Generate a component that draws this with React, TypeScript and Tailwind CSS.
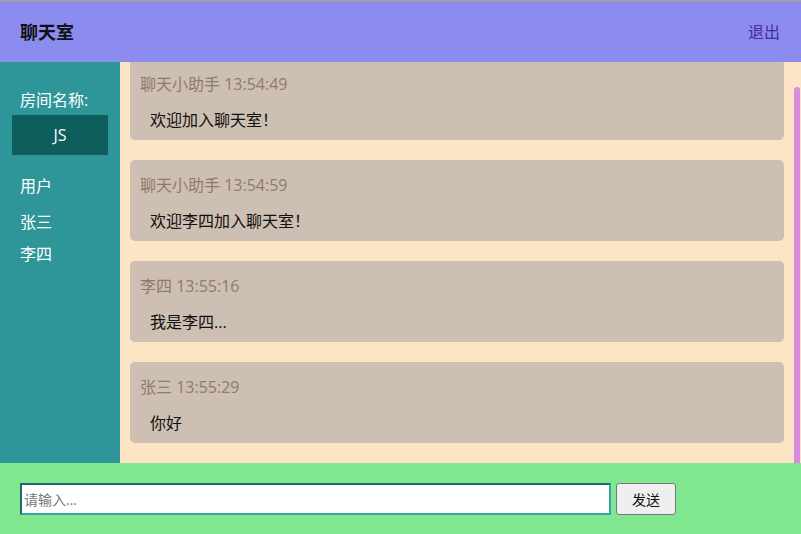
const messages = [
  { name: '聊天小助手', time: '13:54:49', text: '欢迎加入聊天室！' },
  { name: '聊天小助手', time: '13:54:59', text: '欢迎李四加入聊天室！' },
  { name: '李四', time: '13:55:16', text: '我是李四...' },
  { name: '张三', time: '13:55:29', text: '你好' },
]

const users = ['张三', '李四']

export default function App() {
  return (
    <div
      className="flex h-[534px] w-[801px] flex-col overflow-hidden"
      style={{ fontFamily: '"Open Sans", "Noto Sans CJK SC", sans-serif' }}
    >
      {/* 顶部 */}
      <header className="flex h-[62px] shrink-0 items-center justify-between border-t-2 border-[#a09cb4] bg-[#8b8bf0] pl-5 pr-[21px]">
        <h1 className="text-[18px] font-bold text-[#111]">聊天室</h1>
        <button className="text-[16px] text-[#4a2a9c]">退出</button>
      </header>

      <div className="flex h-[401px] shrink-0">
        {/* 侧边栏 */}
        <aside className="w-[120px] shrink-0 bg-[#2e9699] pt-[26px] text-[16px] leading-6 text-white">
          <p className="pl-5">房间名称:</p>
          <div className="ml-3 mt-[3px] flex h-10 w-24 items-center justify-center bg-[#0e5e5e]">
            JS
          </div>
          <p className="mt-[19px] pl-5">用户</p>
          <ul className="mt-3 space-y-2 pl-5">
            {users.map((u) => (
              <li key={u}>{u}</li>
            ))}
          </ul>
        </aside>

        {/* 消息列表 */}
        <main className="relative flex-1 overflow-hidden bg-[#fde4c5]">
          <div className="-mt-[3px] flex flex-col gap-[20px] pl-[10px] pr-[17px]">
            {messages.map((m, i) => (
              <div
                key={i}
                className="h-[81px] rounded-[5px] bg-[#cdbfb2] px-[10px] pt-[13px] text-[16px] leading-6"
              >
                <p className="text-[#8e7b70]">
                  {m.name} {m.time}
                </p>
                <p className="mt-3 pl-[10px] text-[#111]">{m.text}</p>
              </div>
            ))}
          </div>
          <div className="absolute bottom-0 right-[1px] top-[25px] w-[6px] rounded-t-[3px] bg-[#d88be0]" />
        </main>
      </div>

      {/* 输入区 */}
      <footer className="flex flex-1 items-start gap-[5px] bg-[#80e690] pl-5 pt-5">
        <input
          className="h-[32px] w-[591px] border-2 border-b-[#3aa5a5] border-l-[#1d6a6a] border-r-[#3aa5a5] border-t-[#1d6a6a] bg-white px-[2px] text-[14px] outline-none placeholder:text-[#777]"
          placeholder="请输入..."
        />
        <button className="h-[32px] w-[60px] rounded-[3px] border border-[#777] bg-[#efefef] text-[14px] text-[#111]">
          发送
        </button>
      </footer>
    </div>
  )
}
